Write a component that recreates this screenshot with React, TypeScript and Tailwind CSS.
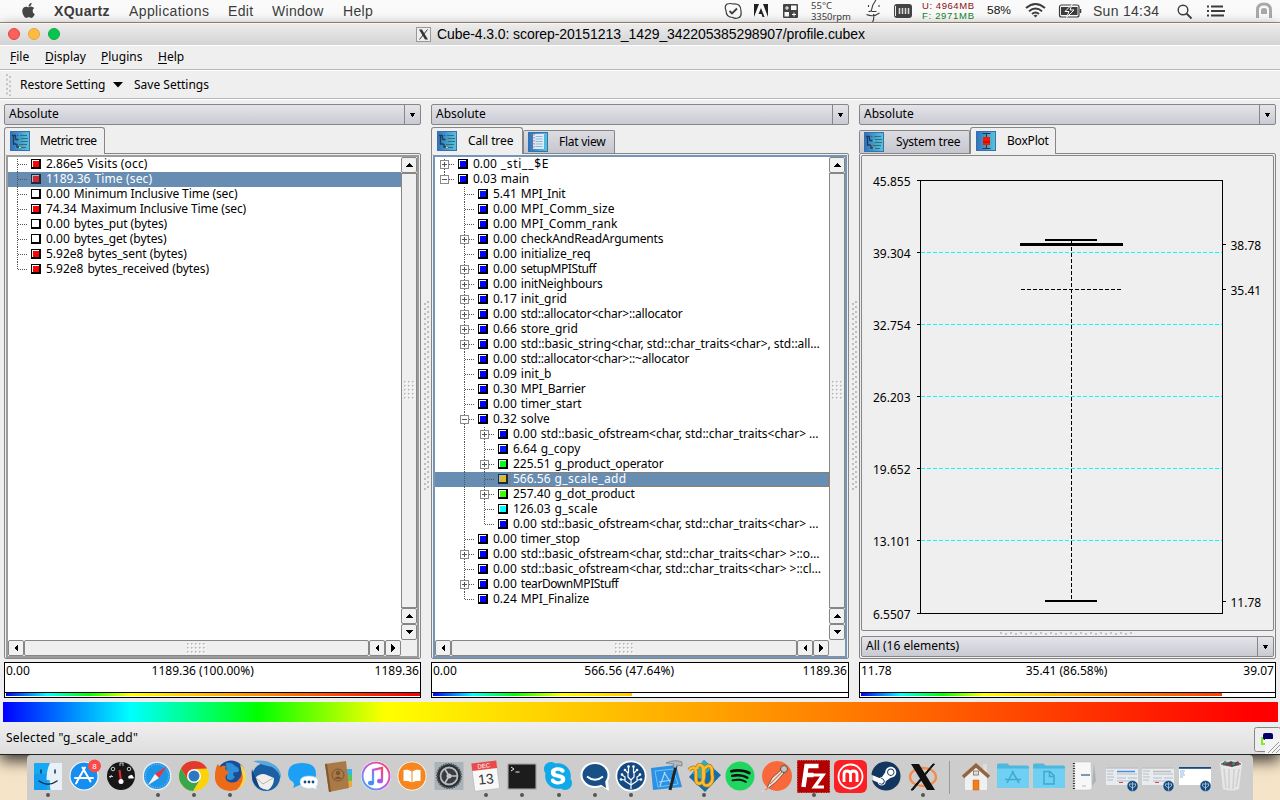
import React from "react";
import { FaApple, FaSkype, FaSpotify, FaSteam } from "react-icons/fa";

const UI = "font-['Noto_Sans',sans-serif]";
const MAC = "font-['Liberation_Sans',sans-serif]";

type Row = { level: number; exp?: "+" | "-"; color: string; value: string; name: string; last?: boolean; selected?: boolean; ls?: string };

const METRICS: Row[] = [
  { level: 0, color: "#ff0000", value: "2.86e5", name: "Visits (occ)", ls: "tracking-[0.15px]" },
  { level: 0, color: "#cc2936", value: "1189.36", name: "Time (sec)", selected: true, ls: "tracking-[0.15px]" },
  { level: 0, color: "#ffffff", value: "0.00", name: "Minimum Inclusive Time (sec)", ls: "tracking-[-0.1px]" },
  { level: 0, color: "#ff0000", value: "74.34", name: "Maximum Inclusive Time (sec)", ls: "tracking-[-0.13px]" },
  { level: 0, color: "#ffffff", value: "0.00", name: "bytes_put (bytes)", ls: "tracking-[-0.1px]" },
  { level: 0, color: "#ffffff", value: "0.00", name: "bytes_get (bytes)", ls: "tracking-[-0.1px]" },
  { level: 0, color: "#ff0000", value: "5.92e8", name: "bytes_sent (bytes)", ls: "tracking-[-0.05px]" },
  { level: 0, color: "#ff0000", value: "5.92e8", name: "bytes_received (bytes)", last: true, ls: "tracking-[-0.08px]" },
];

const B = "#0000ff";
const CALLS: Row[] = [
  { level: 0, exp: "+", color: B, value: "0.00", name: "_sti__$E", ls: "tracking-[0.7px]" },
  { level: 0, exp: "-", color: B, value: "0.03", name: "main", last: true },
  { level: 1, color: "#0012ff", value: "5.41", name: "MPI_Init", ls: "tracking-[-0.25px]" },
  { level: 1, color: B, value: "0.00", name: "MPI_Comm_size", ls: "tracking-[0.2px]" },
  { level: 1, color: B, value: "0.00", name: "MPI_Comm_rank", ls: "tracking-[0.1px]" },
  { level: 1, exp: "+", color: B, value: "0.00", name: "checkAndReadArguments", ls: "tracking-[-0.15px]" },
  { level: 1, color: B, value: "0.00", name: "initialize_req", ls: "tracking-[-0.05px]" },
  { level: 1, exp: "+", color: B, value: "0.00", name: "setupMPIStuff", ls: "tracking-[-0.4px]" },
  { level: 1, exp: "+", color: B, value: "0.00", name: "initNeighbours", ls: "tracking-[-0.2px]" },
  { level: 1, exp: "+", color: B, value: "0.17", name: "init_grid" },
  { level: 1, exp: "+", color: B, value: "0.00", name: "std::allocator<char>::allocator", ls: "tracking-[-0.18px]" },
  { level: 1, exp: "+", color: B, value: "0.66", name: "store_grid" },
  { level: 1, exp: "+", color: B, value: "0.00", name: "std::basic_string<char, std::char_traits<char>, std::all…", ls: "tracking-[-0.04px]" },
  { level: 1, color: B, value: "0.00", name: "std::allocator<char>::~allocator", ls: "tracking-[-0.18px]" },
  { level: 1, color: B, value: "0.09", name: "init_b" },
  { level: 1, color: B, value: "0.30", name: "MPI_Barrier", ls: "tracking-[-0.18px]" },
  { level: 1, color: B, value: "0.00", name: "timer_start", ls: "tracking-[-0.1px]" },
  { level: 1, exp: "-", color: B, value: "0.32", name: "solve" },
  { level: 2, exp: "+", color: B, value: "0.00", name: "std::basic_ofstream<char, std::char_traits<char> …", ls: "tracking-[-0.03px]" },
  { level: 2, color: "#0016ff", value: "6.64", name: "g_copy", ls: "tracking-[0.1px]" },
  { level: 2, exp: "+", color: "#00ff1a", value: "225.51", name: "g_product_operator", ls: "tracking-[-0.15px]" },
  { level: 2, color: "#d6bb30", value: "566.56", name: "g_scale_add", selected: true, ls: "tracking-[0.4px]" },
  { level: 2, exp: "+", color: "#3cff00", value: "257.40", name: "g_dot_product", ls: "tracking-[-0.08px]" },
  { level: 2, color: "#00ffff", value: "126.03", name: "g_scale", ls: "tracking-[0.35px]" },
  { level: 2, color: B, value: "0.00", name: "std::basic_ofstream<char, std::char_traits<char> …", last: true, ls: "tracking-[-0.03px]" },
  { level: 1, color: B, value: "0.00", name: "timer_stop", ls: "tracking-[-0.15px]" },
  { level: 1, exp: "+", color: B, value: "0.00", name: "std::basic_ofstream<char, std::char_traits<char> >::o…", ls: "tracking-[-0.02px]" },
  { level: 1, color: B, value: "0.00", name: "std::basic_ofstream<char, std::char_traits<char> >::cl…", ls: "tracking-[-0.02px]" },
  { level: 1, exp: "+", color: B, value: "0.00", name: "tearDownMPIStuff", ls: "tracking-[-0.42px]" },
  { level: 1, color: B, value: "0.24", name: "MPI_Finalize", last: true, ls: "tracking-[-0.1px]" },
];

function TreeRow({ row, first }: { row: Row; first: boolean }) {
  const x = 9.5 + row.level * 20;
  const dots = { stroke: "#555", strokeWidth: 1, strokeDasharray: "1 1" };
  const sx = x + 13.5;
  const focused = row.selected && row.level === 2;
  return (
    <div className={`flex h-[15px] shrink-0 items-center ${row.selected ? "bg-[#678db2] text-white" : "text-black"}`}>
      <svg width={sx + 11} height="15" className="shrink-0" shapeRendering="crispEdges">
        {row.level === 2 && <line x1={x - 20} x2={x - 20} y1="0" y2="15" {...dots} />}
        <line x1={x} x2={x} y1={first ? 2 : 0} y2={row.last ? 8 : 15} {...dots} />
        <line x1={x + 0.5} x2={x + 10.5} y1="7.5" y2="7.5" {...dots} />
        {row.exp && (
          <g stroke="#8a8a8a">
            <rect x={x - 4} y="3.5" width="8" height="8" fill="#fff" />
            <line x1={x - 2.5} x2={x + 2.5} y1="7.5" y2="7.5" stroke="#555" />
            {row.exp === "+" && <line x1={x} x2={x} y1="5" y2="10" stroke="#555" />}
          </g>
        )}
        <rect x={sx} y="2" width="10" height="10" fill={row.selected ? "#1e2a38" : "#000"} />
        <rect x={sx + 1} y="3" width="7" height="7" fill={row.selected ? "#a9bdd3" : "#fff"} />
        <rect x={sx + 2} y="4" width="6" height="6" fill={row.color} />
      </svg>
      <div className={`flex h-[15px] flex-1 items-center ${focused ? "border border-dotted border-[#b0703c] pl-[3px]" : "pl-[4px]"}`}>
        <span className="-translate-y-px whitespace-pre pr-[4px] text-[12px] leading-[15px]">{row.value}</span>
        <span className={`-translate-y-px whitespace-pre text-[12px] leading-[15px] ${row.ls ?? ""}`}>{row.name}</span>
      </div>
    </div>
  );
}

type Dir = "up" | "down" | "left" | "right";

function ScrollBtn({ dir }: { dir: Dir }) {
  const p = { up: "M3 9h8L7 5z", down: "M3 5h8L7 9z", left: "M9 3v8L5 7z", right: "M5 3v8L9 7z" }[dir];
  return (
    <div className="h-[16px] w-[16px] shrink-0 rounded-[2px] border border-[#868686] bg-[#f1f1f1]">
      <svg width="14" height="14" shapeRendering="crispEdges"><path d={p} fill="#000" /></svg>
    </div>
  );
}

function Grip({ w, h }: { w: number; h: number }) {
  const out: React.ReactElement[] = [];
  for (let y = 0; y < h; y += 4)
    for (let x = 0; x < w; x += 4)
      out.push(
        <g key={`${x}-${y}`}>
          <rect x={x + 1} y={y + 1} width="1.5" height="1.5" fill="#fff" />
          <rect x={x} y={y} width="1.5" height="1.5" fill="#b4b4b4" />
        </g>
      );
  return <svg width={w} height={h}>{out}</svg>;
}

function Combo({ text }: { text: string }) {
  return (
    <div className="flex h-[21px] shrink-0 rounded-[2px] border border-[#868686] bg-gradient-to-b from-[#e4e4ea] to-[#cacad2]">
      <div className="flex flex-1 items-center pb-[2px] pl-[4px] text-[12px]">{text}</div>
      <div className="flex w-[16px] items-center justify-center border-l border-[#868686]">
        <svg width="9" height="5" shapeRendering="crispEdges"><path d="M1 0.5h7L4.5 5z" fill="#000" /></svg>
      </div>
    </div>
  );
}

type Kind = "tree" | "flat" | "box" | "sys";

function TabIcon({ kind }: { kind: Kind }) {
  const id = `tabfill-${kind}`;
  return (
    <svg width="20" height="20" viewBox="0 0 20 20" className="shrink-0">
      <defs>
        <linearGradient id={id}><stop offset="0" stopColor="#2f72bd" /><stop offset="1" stopColor="#5ac3da" /></linearGradient>
      </defs>
      <rect x="0.5" y="0.5" width="19" height="19" fill={`url(#${id})`} stroke="#3a6fae" />
      {(kind === "tree" || kind === "sys") && (
        <g fill="none" stroke="#1d3c55" strokeWidth="1">
          <path d="M2 4.5h4M3.500 4.500v8.500h3M5.500 8.500h3M5.500 4.500v4M7 13v3h2" strokeWidth="1.300" />
          <path d="M10 4.500h7M11 7.500h7M11 10.500h7M9 13.500h8M11 16.500h5" stroke="#33707f" />
          <path d="M7 4.500h1.500" stroke="#2a4bff" />
          <path d="M9 8.500h1.500" stroke={kind === "sys" ? "#33ff44" : "#33aa77"} />
          <path d="M9 16.500h1.500" stroke={kind === "sys" ? "#22ff33" : "#ffff33"} />
          {kind === "sys" && <path d="M7 13.500h1.500" stroke="#ff2222" />}
        </g>
      )}
      {kind === "flat" && (
        <g>
          <rect x="5" y="2" width="11" height="15" fill="#d9ecf8" />
          <path d="M6 2v15" stroke="#ee6666" strokeWidth="1.200" strokeDasharray="1.5 1.5" />
          <path d="M7.500 4.500h7M7.500 7h7M7.500 9.500h7M7.500 12h7M7.500 14.500h7" stroke="#8fb6d4" />
        </g>
      )}
      {kind === "box" && (
        <g>
          <path d="M6.500 2.500h8M10.500 2.500v15M6.500 17.500h8" stroke="#1c3550" fill="none" />
          <rect x="7" y="6" width="7" height="8" fill="#f81800" />
          <path d="M7 11h7" stroke="#aa0000" />
        </g>
      )}
    </svg>
  );
}

function Tab({ kind, label, active, cls, txt }: { kind: Kind; label: string; active?: boolean; cls: string; txt: string }) {
  return (
    <div
      className={
        active
          ? `relative z-10 -mb-px flex h-[27px] items-center rounded-t-[3px] border border-b-0 border-[#868686] bg-[#efefef] pl-[5px] ${cls}`
          : `flex h-[23px] items-center rounded-t-[2px] border border-b-0 border-[#868686] bg-gradient-to-b from-[#dcdce2] to-[#c6c6ce] pl-[4px] ${cls}`
      }
    >
      <TabIcon kind={kind} />
      <span className={`flex-1 whitespace-nowrap text-[12px] ${txt}`}>{label}</span>
    </div>
  );
}

const SPECTRUM = "bg-[linear-gradient(90deg,#0000ff_0%,#00ffff_10%,#00ff80_15%,#00ff00_20%,#ffff00_30%,#ff8000_65%,#ff0000_98%)]";

function ValueBar({ left, mid, right, w, grad, midPad }: { left: string; mid: string; right: string; w: string; grad: string; midPad: string }) {
  return (
    <div className="mt-[3px] flex h-[36px] shrink-0 flex-col border border-black bg-white">
      <div className="flex h-[30px] shrink-0 items-start justify-between border-b border-black px-[1px] text-[12px] leading-[16px]">
        <span>{left}</span>
        <span className={midPad}>{mid}</span>
        <span>{right}</span>
      </div>
      <div className={`ml-[1px] h-[3px] shrink-0 ${w} ${grad}`} />
    </div>
  );
}

function TreePane({ rows, focus }: { rows: Row[]; focus?: boolean }) {
  return (
    <div className="flex h-[506px] shrink-0 rounded-[2px] border border-[#868686] px-[1px] pt-[1px]">
      <div className={`flex min-w-0 flex-1 border-2 ${focus ? "border-[#7795b4]" : "border-[#9c9c9c]"} bg-[#efefef]`}>
        <div className="flex min-w-0 flex-1 flex-col">
          <div className="flex h-[483px] flex-col overflow-hidden bg-white">
            {rows.map((r, i) => <TreeRow key={i} row={r} first={i === 0} />)}
          </div>
          <div className="flex h-[16px] shrink-0">
            <ScrollBtn dir="left" />
            <div className="flex flex-1 items-center justify-center rounded-[2px] border border-[#868686] bg-[#efefef]"><Grip w={19} h={11} /></div>
            <ScrollBtn dir="left" />
            <ScrollBtn dir="right" />
          </div>
        </div>
        <div className="flex h-[483px] w-[16px] shrink-0 flex-col">
          <ScrollBtn dir="up" />
          <div className="flex flex-1 items-center justify-center border border-[#868686] bg-[#efefef]"><Grip w={11} h={19} /></div>
          <ScrollBtn dir="up" />
          <ScrollBtn dir="down" />
        </div>
      </div>
    </div>
  );
}

function BoxPlot() {
  const left: [number, string][] = [[180.5, "45.855"], [252.5, "39.304"], [324.5, "32.754"], [396.5, "26.203"], [468.5, "19.652"], [540.5, "13.101"], [613.5, "6.5507"]];
  const right: [number, string][] = [[244.5, "38.78"], [289.5, "35.41"], [601.5, "11.78"]];
  return (
    <svg viewBox="862 156 411 474" width="411" height="474" className={UI} fontSize="12">
      <g stroke="#000" fill="none" shapeRendering="crispEdges">
        <rect x="920.5" y="180.5" width="302" height="433" />
        {left.map(([y]) => <line key={y} x1="917" x2="921" y1={y} y2={y} />)}
        {right.map(([y]) => <line key={y} x1="1222" x2="1226" y1={y} y2={y} />)}
        {left.slice(1, 6).map(([y]) => <line key={y} x1="921" x2="1222" y1={y} y2={y} stroke="#00ffff" strokeDasharray="4 2" />)}
        <line x1="1045" x2="1097" y1="240" y2="240" strokeWidth="2" />
        <line x1="1020" x2="1123" y1="244.5" y2="244.5" strokeWidth="3" />
        <line x1="1021" x2="1122" y1="289.5" y2="289.5" strokeDasharray="4 2" />
        <line x1="1071.5" x2="1071.5" y1="241" y2="600" strokeDasharray="4 2" />
        <line x1="1045" x2="1097" y1="601" y2="601" strokeWidth="2" />
      </g>
      {left.map(([y, t]) => <text key={t} x="910.500" y={y + 5} textAnchor="end">{t}</text>)}
      {right.map(([y, t]) => <text key={t} x="1230.500" y={y + 5}>{t}</text>)}
    </svg>
  );
}

function Splitter() {
  return (
    <div className="flex w-[10px] shrink-0 items-center justify-center pb-[12px]">
      <svg width="5" height="192">
        {Array.from({ length: 38 }, (_, i) => (
          <g key={i} fill="#bdbdbd"><rect x={0} y={i * 5 + 2} width="2" height="2" /><rect x={3} y={i * 5} width="2" height="2" /></g>
        ))}
      </svg>
    </div>
  );
}

function Folder({ children }: { children: React.ReactNode }) {
  return (
    <g>
      <path d="M0 5q0-1.500 1.500-1.500h9l2 2h18q1.500 0 1.500 1.500v19q0 2-1.500 2h-29Q0 28 0 26z" fill="#4db8de" />
      <path d="M0 8.500h32V26q0 2-1.500 2h-29Q0 28 0 26z" fill="#6fd0f3" />
      <g stroke="#3ca9d0" strokeWidth="1.5" fill="none">{children}</g>
    </g>
  );
}

function MiniWindow({ v }: { v: number }) {
  return (
    <g>
      <rect x="0" y="7" width="32" height="18" fill={v === 2 ? "#fff" : "#e9ecef"} />
      <rect x="0" y="7" width="32" height="1.800" fill={v === 2 ? "#174a7c" : "#c4c4c4"} />
      {v < 2 ? (
        <g>
          <path d="M1 11h7M1 14h6M1 17h7M1 20h6M11 14h20M11 18h9M22 18h9M11 21h18" stroke="#b3bcc6" />
          <path d="M11 11.500h18" stroke={v === 0 ? "#4c8be0" : "#bbb"} strokeWidth="1.5" />
          <path d="M13 22.500h4" stroke="#dd4444" />
        </g>
      ) : <path d="M1 11h5M1 13h4M1 15h5M1 17h3" stroke="#8fb8e0" />}
      <circle cx="26.500" cy="26" r="5.500" fill="#174a7c" stroke="#dce5ee" strokeWidth=".5" />
      <path d="M26.500 30.500v-8.500M26.500 28l-3-2v-2.500M26.500 28l3-2v-2.500M25 25v-2M28 25v-2" stroke="#cfe0f0" fill="none" strokeWidth=".7" />
    </g>
  );
}

const ICONS: React.ReactNode[] = [
  <g key="finder"><rect x="2" y="3" width="28" height="27" rx="1" fill="#18a9f5" /><path d="M2 14h13v16H3q-1 0-1-1z" fill="#0b8fea" opacity=".5" /><path d="M18 3h12v27H18.500q-1-5-.8-10h-3.200Q14.500 10 18 3z" fill="#e8f0f8" /><path d="M9 10v3M23 10v3M7 21q9 6.500 18 0" stroke="#163049" strokeWidth="1.500" fill="none" strokeLinecap="round" /></g>,
  <g key="store"><circle cx="16" cy="16" r="14.500" fill="#fff" /><circle cx="16" cy="16" r="13.500" fill="#168df0" /><path d="M17 7.500l-8 14M14.500 7.500l8 14M7 18h13M22 18h3M9 22l-1 1.500" stroke="#fff" strokeWidth="2" strokeLinecap="round" /><circle cx="26.500" cy="6" r="6.500" fill="#fb4a48" /><text x="26.500" y="9" fontSize="8" textAnchor="middle" fill="#fff">8</text></g>,
  <g key="dash"><circle cx="16" cy="16" r="14.500" fill="#ccc" /><circle cx="16" cy="16" r="14" fill="#171717" /><path d="M14.500 10L16 21" stroke="#f2272c" strokeWidth="2" /><circle cx="16" cy="21.500" r="2.500" fill="#fff" /><g fill="none" stroke="#ddd" strokeWidth=".9"><circle cx="8" cy="9" r="1.800" /><circle cx="24" cy="9" r="1.800" /><path d="M15 6V3h3v3M4 16.500h4M6.500 15l-1.500 3" /></g><path d="M23.500 18.500q-1-3 1.500-3 2-2 3 1 1.500.5.500 2z" fill="#fff" /></g>,
  <g key="safari"><circle cx="16" cy="16" r="14.500" fill="#e9edf1" /><circle cx="16" cy="16" r="13" fill="#1f95e8" /><circle cx="16" cy="16" r="11.500" fill="none" stroke="#9bd6ff" strokeDasharray=".8 1.600" /><path d="M25.500 6.500L18 18L14 14z" fill="#f4303a" /><path d="M6.500 25.500L14 14L18 18z" fill="#f4f4f4" /></g>,
  <g key="chrome"><circle cx="16" cy="16" r="15" fill="#fcd209" /><path d="M3 8.500A15 15 0 0 1 29 8.500L16 9 10 20z" fill="#e23b2e" /><path d="M3 8.500A15 15 0 0 0 15 31L22 19.500 10 20z" fill="#3aa64c" /><circle cx="16" cy="16" r="7" fill="#fff" /><circle cx="16" cy="16" r="5.500" fill="#2e78c2" /></g>,
  <g key="firefox"><circle cx="17" cy="14.500" r="14" fill="#174d96" /><path d="M12 3q6-1 9 3 4 1 4 5-2 2-5 1-2 3 1 5-3 5-8 2z" fill="#2f8fd6" /><path d="M2 8q1-3 2-4l2 3q3-2 6-1-2 3 1 5 2 1 2 2l-3 2q-2 5 3 7 7 2 10-3 4-4 2-10 5 5 4 11-3 11-15 11Q3 30 1 19q-.500-6 1-11z" fill="#ec6a18" /><path d="M26 4q6 5 6 13-1 9-9 13 8-9 5-17z" fill="#fbd84c" /></g>,
  <g key="thunder"><circle cx="16" cy="17" r="14" fill="#1b5fa5" /><path d="M3 1q14-2 23 5 6 6 5 13-2-8-9-12Q12 5 3 1z" fill="#57a9dd" /><path d="M5 18q6-6 12-3l7 3q0 8-6 12-10 0-13-12z" fill="#f1eeec" /><path d="M6 18l7 6 10-6" stroke="#bbb3ae" fill="none" /><path d="M2 9q-2 13 8 20l-4-11q-3-4-4-9z" fill="#15457f" /></g>,
  <g key="msg"><path d="M15 3q14 0 14 11 0 10-14 10l-9 4q2-3 0-6-5-3-5-8Q1 3 15 3z" fill="#1ca0f6" /><path d="M22 16q9 0 9 6 0 3-2 4.500l1 3-4-1.500q-12 2-13-6 0-6 9-6z" fill="#fff" stroke="#b9dcf2" strokeWidth=".6" /><g fill="#174a7c"><circle cx="18" cy="22" r="1.400" /><circle cx="22" cy="22" r="1.400" /><circle cx="26" cy="22" r="1.400" /></g></g>,
  <g key="book"><rect x="23" y="9" width="6" height="18" fill="#35b5e0" /><rect x="24" y="15" width="5" height="6" fill="#59c84c" /><rect x="24" y="21" width="5" height="6" fill="#f2a93b" /><path d="M2 4L23 1l3 27L6 32z" fill="#a97a47" /><path d="M2 4l2-.3L8 31.700 6 32z" fill="#80592f" /><circle cx="15" cy="15" r="6" fill="none" stroke="#7b5530" /><circle cx="15" cy="13" r="2.200" fill="#7b5530" /><path d="M11 19q4-5 8 0z" fill="#7b5530" /></g>,
  <g key="itunes"><circle cx="16" cy="16" r="15" fill="#fff" /><circle cx="16" cy="16" r="13.500" fill="#fff" stroke="url(#rainbow)" strokeWidth="2" /><path d="M13 23V10l9-2v13" stroke="url(#rainbow)" strokeWidth="2.300" fill="none" /><ellipse cx="11" cy="23" rx="3" ry="2.300" fill="#4a8cf5" /><ellipse cx="20" cy="21" rx="3" ry="2.300" fill="#a45bea" /></g>,
  <g key="ibooks"><circle cx="16" cy="16" r="14.500" fill="#fff" /><circle cx="16" cy="16" r="13.700" fill="#f6861f" /><path d="M16 11q-4-3-9-1.500v12q5-1 9 1.500 4-2.500 9-1.500v-12Q20 8 16 11zM16 11v12" fill="#fff" stroke="#f6861f" strokeWidth="1" /></g>,
  <g key="prefs"><rect x="1.500" y="2" width="29" height="28" rx="1" fill="#a9b3ba" /><circle cx="16" cy="16" r="12" fill="#2a2c2f" stroke="#55585c" strokeDasharray="1.500 1" strokeWidth="2" /><circle cx="16" cy="16" r="8.500" fill="#393c40" stroke="#b5b9bd" strokeWidth="1.800" /><circle cx="16" cy="16" r="2.500" fill="#ccc" /><path d="M16 16l-4-7M16 16h8.500M16 16l-4 7" stroke="#c1c4c7" strokeWidth="1.600" /></g>,
  <g key="cal"><g transform="rotate(-7 16 16)"><rect x="4" y="3" width="25" height="27" rx="1" fill="#f8f8f8" stroke="#aaa" strokeWidth=".5" /><rect x="4" y="2" width="25" height="7.500" fill="#e94b4c" /><text x="16" y="8" fontSize="6" textAnchor="middle" fill="#fff">DEC</text><text x="16.500" y="24" fontSize="14" textAnchor="middle" fill="#333">13</text></g></g>,
  <g key="term"><rect x="1" y="3" width="30" height="27" rx="1.500" fill="#b4b4b4" /><rect x="2.500" y="4.500" width="27" height="24" fill="#1c1c1c" /><path d="M5 7l3 2-3 2M9.500 12h4" stroke="#eee" fill="none" /></g>,
  <g key="skype"><rect x="9" y="7" width="14" height="18" fill="#fff" /><FaSkype x={0} y={0} size={32} color="#0fa9ea" /></g>,
  <g key="chat"><ellipse cx="16" cy="15" rx="14.500" ry="13" fill="#fff" /><path d="M21 25l9 6-1-10z" fill="#fff" /><ellipse cx="16" cy="15" rx="12.500" ry="11" fill="#184f86" /><path d="M21 24l6 4-1-8z" fill="#184f86" /><path d="M8 16.500q8 6.500 16 0" stroke="#fff" strokeWidth="1.800" fill="none" /></g>,
  <g key="tree"><circle cx="16" cy="16" r="15.500" fill="#fff" /><circle cx="16" cy="16" r="13.800" fill="#144a83" /><g stroke="#fff" strokeWidth="1.200" fill="none"><path d="M16 29V19M16 25l-6-4v-4l-3-2M16 25l6-4v-4l3-2M16 20l-3-3v-4l-2-2M16 20l3-3v-4l2-2M13.500 13V7M18.500 13V7M10 20l-4-.5M22 20l4-.5" /></g><g fill="#fff"><circle cx="13.500" cy="6.500" r="1.300" /><circle cx="18.500" cy="6.500" r="1.300" /><circle cx="10" cy="10" r="1.300" /><circle cx="22" cy="10" r="1.300" /><circle cx="7" cy="14.500" r="1.300" /><circle cx="25" cy="14.500" r="1.300" /><circle cx="6" cy="19.500" r="1.300" /><circle cx="26" cy="19.500" r="1.300" /></g></g>,
  <g key="xcode"><path d="M0 8l25-3 6 22L2 30z" fill="#2a92e5" /><path d="M4 11l18-2 5 15-20 3z" fill="none" stroke="#8ecbf8" strokeWidth=".8" /><path d="M13 12l8 13M14 12L9 26M8 22l13-2" stroke="#a8dafc" strokeWidth="1.200" /><path d="M25 6l-6 24" stroke="#222" strokeWidth="3" /><path d="M15 3q9-4 16-1v4l-5-1-1 3-3-1 1-3z" fill="#b5babf" stroke="#62686e" strokeWidth=".6" /></g>,
  <g key="wing"><path d="M16 0L33 15 17 32 1 17z" fill="#126da8" /><path d="M16 0L24 8 12 19 4 13z" fill="#24b2c9" /><path d="M1 10q6-6 7 2v8q1 5 5 3 3-2 3-8V9q6-7 8 1v4q2 7-3 11-6 2-6-4V7Q10 2 9 9" fill="none" stroke="#bb760d" strokeWidth="4" /><path d="M1 10q6-6 7 2v8q1 5 5 3 3-2 3-8V9q6-7 8 1v4q2 7-3 11-6 2-6-4V7Q10 2 9 9" fill="none" stroke="#f8bd31" strokeWidth="2.600" /></g>,
  <g key="spotify"><circle cx="16" cy="16" r="12" fill="#111" /><FaSpotify x={1} y={1} size={30} color="#1fd760" /></g>,
  <g key="postman"><circle cx="16" cy="16" r="15" fill="#f9683a" /><path d="M5 30l6-12 9-8 3 3-8 9z" fill="#eee8e2" stroke="#6b4338" strokeWidth=".8" /><path d="M9 24l12-12" stroke="#c98a62" strokeWidth="1.200" /><circle cx="23" cy="9" r="3.500" fill="#c7c2bd" stroke="#555544" /><path d="M1 31.500l5-4 1.500 1.500z" fill="#f9683a" stroke="#fff" strokeWidth=".4" /></g>,
  <g key="fz"><rect x="0" y="0" width="33" height="33" fill="#b30000" stroke="#cdcdcd" strokeWidth=".8" strokeDasharray="1.500 1" /><path d="M6.500 27L9.500 6h12M8.500 15h8" stroke="#fff" strokeWidth="4.500" fill="none" /><path d="M16 15h10L17.500 27H27" stroke="#fff" strokeWidth="3.200" fill="none" /></g>,
  <g key="m"><rect x="0" y="0" width="33" height="33" rx="6" fill="#fb2026" /><circle cx="16.500" cy="16.500" r="12" fill="none" stroke="#fff" strokeWidth="1.800" /><path d="M10 22v-8q0-3 3-3t3.500 3v8M16.500 14q0-3 3-3t3.500 3v8" fill="none" stroke="#fff" strokeWidth="2.800" /></g>,
  <g key="steam"><circle cx="16" cy="16" r="13" fill="#fff" /><FaSteam x={1} y={1} size={30} color="#12365e" /></g>,
  <g key="x"><ellipse cx="16" cy="17" rx="13" ry="9" fill="none" stroke="#f58a49" strokeWidth="2.300" /><path d="M4 4h8l16 26h-8z" fill="#111" /><path d="M27.500 4H26L4 30h2z" fill="#111" stroke="#111" /></g>,
];

const RIGHT_ICONS: React.ReactNode[] = [
  <g key="home"><rect x="23" y="4" width="4" height="8" fill="#ddd" /><path d="M5 15L16 5l11 10v15H5z" fill="#f0f0f0" /><path d="M3 17L16 5.500 29 17" fill="none" stroke="#96643a" strokeWidth="3.600" /><rect x="13" y="20" width="6" height="10" fill="#ee7f1b" stroke="#c55e10" strokeWidth=".5" /><rect x="13.500" y="11" width="5" height="4" fill="#ddd" stroke="#886666" strokeWidth=".8" /></g>,
  <Folder key="a"><path d="M16.500 11l-6.500 12M15 11l7 12M8 19.500h16" /></Folder>,
  <Folder key="d"><path d="M11 11.500h6l4 4V24H11zM16.500 11.500v5h5" /></Folder>,
  <g key="doc"><path d="M25 3l2 18-4 5z" fill="#a9b4b4" /><path d="M5 2h17l1 26-2 2H5z" fill="#f7f7f7" stroke="#bbb" strokeWidth=".5" /><path d="M5 3v26" stroke="#333" strokeWidth="2.200" strokeDasharray="1 1.500" /><path d="M12 15h9" stroke="#5f8199" strokeWidth="1.600" /><path d="M13 26h4" stroke="#bbb" /></g>,
  <MiniWindow key="w0" v={0} />,
  <MiniWindow key="w1" v={1} />,
  <MiniWindow key="w2" v={2} />,
  <g key="trash"><path d="M5 4h22l-3 25q-8 3-16 0z" fill="#e6e6e6" /><path d="M9 9l2 19M14 9v20M19 9l-1 20M24 9l-3 18" stroke="#cfcfcf" strokeWidth="1.500" /><ellipse cx="16" cy="4" rx="11" ry="3" fill="#888" stroke="#f4f4f4" /><path d="M7 4l3-3 3 2 3-2 3 2 4-2 2 3-8 3z" fill="#4b4b4b" /><path d="M9 3h3M17 4h3" stroke="#2a9a8a" strokeWidth="1.500" /><path d="M13 5h3M21 3h3" stroke="#bb3333" strokeWidth="1.500" /></g>,
];

const RUNNING = new Set([0, 3, 4, 5, 12, 13, 14, 15, 16, 18, 21, 24]);

function Slot({ children, on }: { children: React.ReactNode; on?: boolean }) {
  return (
    <div className="flex w-[36.46px] shrink-0 flex-col items-center pt-[5px]">
      <svg width="33" height="33" viewBox="0 0 33 33" className={`overflow-visible ${MAC}`}>{children}</svg>
      {on && <div className="h-[4px] w-[4px] rounded-full bg-[#555]" />}
    </div>
  );
}

function MenuBar() {
  return (
    <div className={`flex h-[22px] shrink-0 items-center bg-[#fafafa] pl-[20px] text-[14px] text-[#3d3d3d] ${MAC}`}>
      <FaApple size={17} className="mr-[17px] -translate-y-px" color="#474747" />
      <span className="w-[75px] font-bold tracking-[0.3px]">XQuartz</span>
      <span className="w-[99px] tracking-[0.4px]">Applications</span>
      <span className="w-[44px] tracking-[0.3px]">Edit</span>
      <span className="w-[71px] tracking-[0.3px]">Window</span>
      <span className="flex-1 tracking-[0.3px]">Help</span>
      <svg width="580" height="22" viewBox="700 0 580 22" className="shrink-0" fill="none" stroke="#3d3d3d">
        <path d="M727 4q4-1 6 0 8-1 8 7 1 6-3 7-3 1-5-.5-7 0-7-7-2-4 1-6.500z" strokeWidth="1.200" />
        <path d="M729.500 11l2.500 2.500 5-5" strokeWidth="1.800" />
        <path d="M754 4h5l-5 13zM768 4h-5l5 13zM761 8l3.500 9h-2l-1-3h-3z" fill="#222" stroke="none" />
        <rect x="783" y="4" width="15" height="14" rx="1" fill="#444" stroke="none" />
        <path d="M791 5.500h5.500v4.500H791zM784.500 12h4.500v4.500h-4.500z" fill="#fafafa" stroke="none" />
        <path d="M785 8h4M787 6v4M792 14.500h4M794 12.500v4" stroke="#fff" />
        <g className={UI} fill="#3d3d3d" stroke="none" fontSize="9.500">
          <text x="811" y="9" textLength="21">55°C</text>
          <text x="811" y="19.500" textLength="40">3350rpm</text>
        </g>
        <path d="M876 0q-4 5-4.500 10 0 1.500-3 1.500M873.500 14q1 5-1 8M866.500 14.500q7 3 13-1.500M871.500 11.500h5M868.500 5v2M879 5v2" strokeWidth="1.100" />
        <rect x="894" y="4" width="18" height="14" rx="3" fill="#444" stroke="none" />
        <path d="M899.500 8v6M902.500 8v6M905.500 8v6M908.500 8v6" stroke="#ddd" strokeWidth="1.500" />
        <path d="M895.500 6v10" stroke="#eee" />
        <g stroke="none" fontSize="9.500">
          <text x="922" y="9" fill="#8c1018" textLength="52">U: 4964MB</text>
          <text x="922" y="19" fill="#118426" textLength="52">F: 2971MB</text>
        </g>
        <text x="987" y="14" fontSize="11" fill="#111" stroke="none" textLength="24" lengthAdjust="spacingAndGlyphs">58%</text>
        <g strokeWidth="2"><path d="M1026 8q9.500-8 19 0" /><path d="M1029 11.200q6.500-5.500 13 0" /><path d="M1032 14q3.500-3 7 0" /></g>
        <path d="M1033.500 15.500l2 2 2-2q-2-1.500-4 0z" fill="#3d3d3d" stroke="none" />
        <rect x="1059.500" y="5" width="19.500" height="12" rx="2" strokeWidth="1.200" />
        <rect x="1061" y="7" width="16.500" height="8" fill="#3d3d3d" stroke="none" />
        <path d="M1080.500 9v4" strokeWidth="1.500" />
        <path d="M1072 4.500l-7 7h4l-2.500 6 7.500-7.500h-4z" fill="#333" stroke="#fff" />
        <text x="1093" y="16" fontSize="14" fill="#3d3d3d" stroke="none" textLength="66">Sun 14:34</text>
        <circle cx="1183" cy="10" r="4.800" strokeWidth="1.400" />
        <path d="M1186.500 13.500l5 5" strokeWidth="1.800" />
        <path d="M1207 6.500h2M1207 11h2M1207 15.500h2M1211 6.500h12M1211 11h14M1211 15.500h13" strokeWidth="1.800" />
        <path d="M1257.500 18v-8q0-6 6.500-6t6.500 6v8" stroke="#a9a9a9" strokeWidth="3" />
        <path d="M1261 14v-4q0-2 3-2t3 2v4z" fill="#a9a9a9" stroke="none" />
      </svg>
    </div>
  );
}

export default function App() {
  return (
    <div className={`flex h-[800px] w-[1280px] flex-col overflow-hidden bg-[#f6e4c8] text-black ${UI}`}>
      <MenuBar />
      <div className="h-px shrink-0 bg-[#a39176]" />
      <div className="relative z-20 flex h-[732px] shrink-0 flex-col border-b border-[#222] bg-[#efefef] shadow-[0_6px_14px_rgba(0,0,0,0.75)]">
        <div className={`flex h-[22px] shrink-0 items-center border-t border-[#f6f6f6] bg-gradient-to-b from-[#ececec] to-[#d3d3d3] ${MAC}`}>
          <div className="flex w-[416px] gap-[8px] pl-[8px]">
            <i className="h-[12px] w-[12px] -translate-y-px rounded-full border border-[#e2463f] bg-[#fc605c]" />
            <i className="h-[12px] w-[12px] -translate-y-px rounded-full border border-[#e1a73e] bg-[#fdbc40]" />
            <i className="h-[12px] w-[12px] -translate-y-px rounded-full border border-[#12ac3d] bg-[#06c450]" />
          </div>
          <svg width="15" height="15" viewBox="0 0 15 15"><rect x=".5" y=".5" width="14" height="14" fill="#eee" stroke="#999" /><path d="M3 2.500h3l6 10H9z" fill="#333" /><path d="M11.500 2.500l-8 10" stroke="#333" /></svg>
          <span className="ml-[6px] whitespace-nowrap text-[14px] tracking-[-0.08px]">Cube-4.3.0: scorep-20151213_1429_342205385298907/profile.cubex</span>
        </div>
        <div className="flex h-[25px] shrink-0 items-center border-b border-t border-b-[#b8b8b8] border-t-white pb-[2px] pl-[10px] text-[12px]">
          <span className="w-[35px]"><u className="underline-offset-2">F</u>ile</span>
          <span className="w-[56px]"><u className="underline-offset-2">D</u>isplay</span>
          <span className="w-[57px]"><u className="underline-offset-2">P</u>lugins</span>
          <span><u className="underline-offset-2">H</u>elp</span>
        </div>
        <div className="flex h-[29px] shrink-0 items-center border-b border-t border-b-[#b8b8b8] border-t-white pl-[6px] text-[12px]">
          <svg width="6" height="22">{[0, 1, 2, 3, 4].map((i) => <g key={i} fill="#c4c4c4"><rect x="0" y={i * 4.6} width="2" height="2" /><rect x="3" y={i * 4.6 + 2} width="2" height="2" /></g>)}</svg>
          <span className="ml-[8px] w-[93px] tracking-[-0.05px]">Restore Setting</span>
          <svg width="10" height="6" className="mr-[11px]"><path d="M0 0h10L5 5.500z" /></svg>
          <span>Save Settings</span>
        </div>
        <div className="flex h-[603px] shrink-0 border-t border-white pl-[4px] pt-[4px]">
          <div className="flex w-[417px] shrink-0 flex-col">
            <Combo text="Absolute" />
            <div className="mt-[2px] flex h-[26px] shrink-0 items-end"><Tab kind="tree" label="Metric tree" active cls="w-[101px]" txt="pl-[10px] tracking-[-0.45px]" /></div>
            <TreePane rows={METRICS} />
            <ValueBar left="0.00" mid="1189.36 (100.00%)" right="1189.36" w="w-[414px]" grad={SPECTRUM} midPad="pl-[1px]" />
          </div>
          <Splitter />
          <div className="flex w-[418px] shrink-0 flex-col">
            <Combo text="Absolute" />
            <div className="mt-[2px] flex h-[26px] shrink-0 items-end">
              <Tab kind="tree" label="Call tree" active cls="w-[92px]" txt="pl-[11px] tracking-[-0.1px]" />
              <Tab kind="flat" label="Flat view" cls="w-[92px]" txt="pl-[11px] tracking-[-0.25px]" />
            </div>
            <TreePane rows={CALLS} focus />
            <ValueBar left="0.00" mid="566.56 (47.64%)" right="1189.36" w="w-[199px]" grad="bg-[linear-gradient(90deg,#0000ff_0%,#00ffff_20%,#00ff00_41%,#ffff00_65%,#ffc800_100%)]" midPad="pr-[1px] tracking-[0.1px]" />
          </div>
          <Splitter />
          <div className="flex w-[417px] shrink-0 flex-col">
            <Combo text="Absolute" />
            <div className="mt-[2px] flex h-[26px] shrink-0 items-end">
              <Tab kind="sys" label="System tree" cls="w-[111px]" txt="pl-[12px] tracking-[-0.2px]" />
              <Tab kind="box" label="BoxPlot" active cls="w-[86px]" txt="pl-[11px] tracking-[-0.2px]" />
            </div>
            <div className="flex h-[506px] shrink-0 flex-col rounded-[2px] border border-[#868686] p-[1px]">
              <div className="h-[476px] shrink-0 rounded-[2px] border border-[#868686]"><BoxPlot /></div>
              <div className="flex h-[5px] items-center justify-center">
                <svg width="135" height="3">{Array.from({ length: 27 }, (_, i) => <rect key={i} x={i * 5} y={i % 2 ? 1 : 0} width="2" height="2" fill="#c2c2c2" />)}</svg>
              </div>
              <Combo text="All (16 elements)" />
            </div>
            <ValueBar left="11.78" mid="35.41 (86.58%)" right="39.07" w="w-[361px]" grad="bg-[linear-gradient(90deg,#0000ff_0%,#00ffff_11%,#00ff00_22.5%,#ffff00_34%,#ff8000_75%,#ff4000_100%)]" midPad="pr-[2px]" />
          </div>
        </div>
        <div className={`ml-[3px] mr-[2px] h-[20px] shrink-0 ${SPECTRUM}`} />
        <div className="flex flex-1 items-center justify-between bg-gradient-to-b from-[#efefef] to-[#dedede] pl-[6px] text-[12px] tracking-[0.2px]">
          <span>Selected "g_scale_add"</span>
          <svg width="26" height="27" viewBox="1254 727 26 27" className="-mb-[4px]">
            <rect x="1254.500" y="727.500" width="26" height="24" rx="2" fill="#eee" stroke="#868686" />
            <rect x="1262" y="738" width="8" height="6" fill="#fff" stroke="#7df01a" strokeWidth="2" />
            <rect x="1263" y="733" width="10" height="7" rx="2" fill="#000068" />
            <rect x="1265" y="739" width="16" height="16" fill="#f4f4f4" />
            <path d="M1268 753l11-11M1272 753l8-8M1276 753l5-5" stroke="#999" />
          </svg>
        </div>
      </div>
      <div className="flex flex-1 pl-[27px]">
        <div className="relative z-30 flex w-[1226px] rounded-t-[4px] bg-[#cdcdcd] pl-[3px]">
          <svg width="0" height="0" className="absolute"><defs><linearGradient id="rainbow" x1="1" y1="0" x2="0" y2="1"><stop offset="0" stopColor="#f8456c" /><stop offset=".5" stopColor="#bf5be8" /><stop offset="1" stopColor="#2fb7f5" /></linearGradient></defs></svg>
          {ICONS.map((ic, i) => <Slot key={i} on={RUNNING.has(i)}>{ic}</Slot>)}
          <div className="flex w-[17px] shrink-0 justify-center pt-[6px]"><div className="h-[33px] w-px bg-[#9c9c9c]" /></div>
          {RIGHT_ICONS.map((ic, i) => <Slot key={i}>{ic}</Slot>)}
        </div>
      </div>
    </div>
  );
}
